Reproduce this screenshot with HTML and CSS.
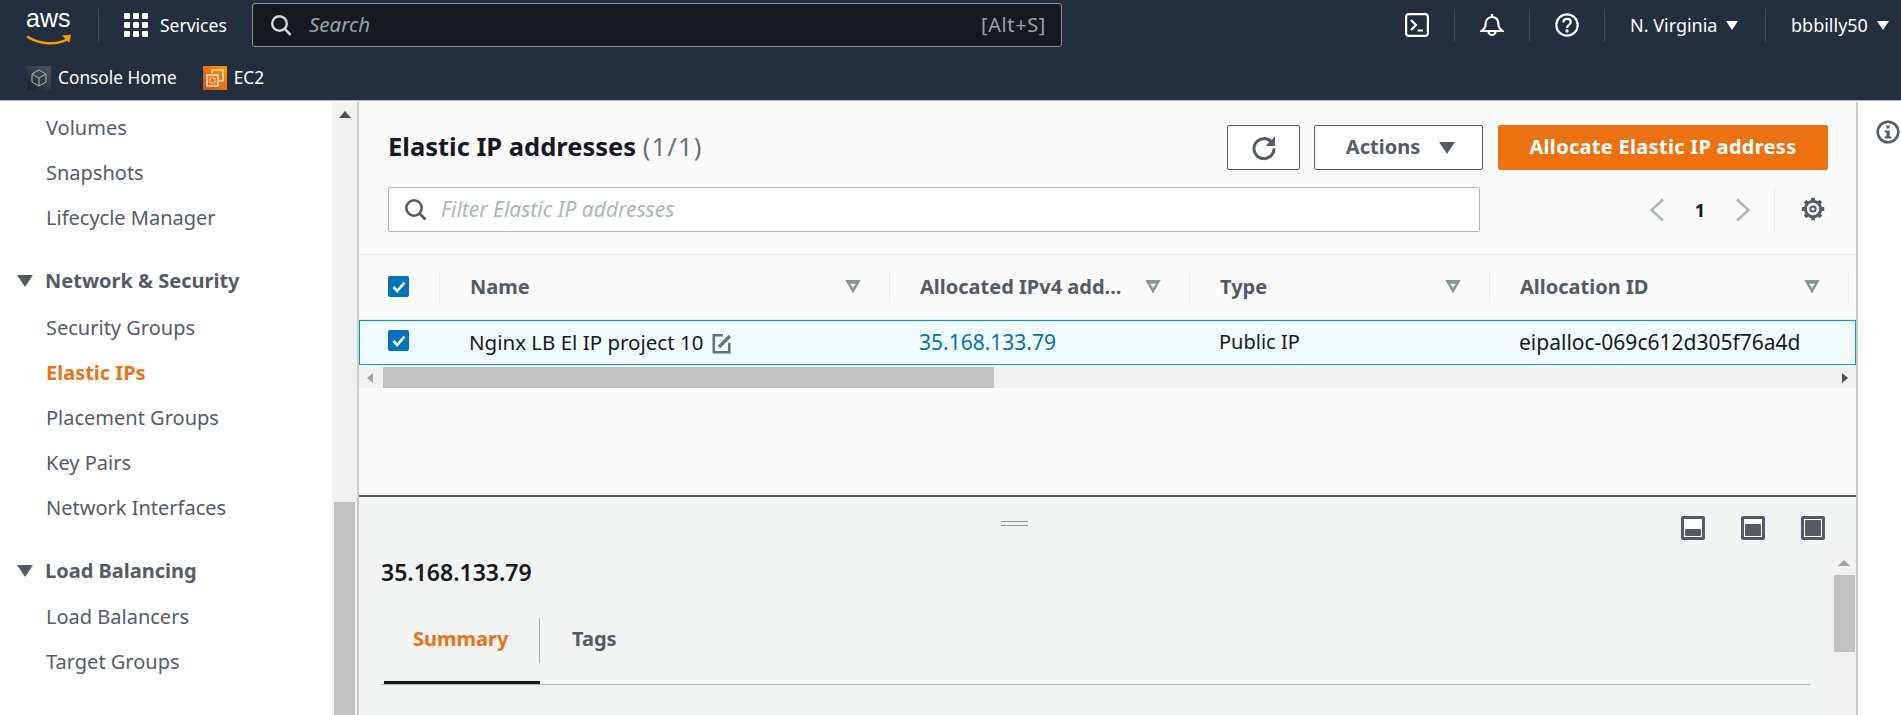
FILE: index.html
```html
<!DOCTYPE html>
<html lang="en">
<head>
  <meta charset="UTF-8">
  <title>Elastic IP addresses | EC2 Management Console</title>
  <link rel="stylesheet" href="styles.css">
</head>
<body>
  <header class="topbar">
    <div class="nav-main">
      <div class="aws-logo">
        <span class="aws-word">aws</span>
        <svg class="aws-smile" width="48" height="13" viewBox="0 0 48 13"><path d="M2 2.500c12 8 30 9 41 2.500" fill="none" stroke="#f90" stroke-width="2.600"/><path d="M37 1.500l9-.8-1.600 8.300z" fill="#f90"/></svg>
      </div>
      <span class="nav-sep sep-logo"></span>
      <svg class="grid-icon" width="24" height="24" viewBox="0 0 24 24" fill="#fff"><rect x="0" y="0" width="6" height="6" rx="1"/><rect x="9" y="0" width="6" height="6" rx="1"/><rect x="18" y="0" width="6" height="6" rx="1"/><rect x="0" y="9" width="6" height="6" rx="1"/><rect x="9" y="9" width="6" height="6" rx="1"/><rect x="18" y="9" width="6" height="6" rx="1"/><rect x="0" y="18" width="6" height="6" rx="1"/><rect x="9" y="18" width="6" height="6" rx="1"/><rect x="18" y="18" width="6" height="6" rx="1"/></svg>
      <span class="services">Services</span>
      <div class="search-box">
        <svg width="22" height="22" viewBox="0 0 22 22" fill="none" stroke="#d5dbdb" stroke-width="2.400"><circle cx="9.500" cy="9.500" r="7.300"/><path d="M14.800 14.800l5.700 6"/></svg>
        <span class="search-text">Search</span>
        <span class="search-key">[Alt+S]</span>
      </div>
      <svg class="nav-icon icon-term" width="24" height="24" viewBox="0 0 24 24" fill="none" stroke="#fff" stroke-width="2.200"><rect x="1.100" y="1.100" width="21.800" height="21.800" rx="3"/><path d="M6 7l5 5-5 5M12.500 17.500h5.500"/></svg>
      <span class="nav-sep"></span>
      <svg class="nav-icon" width="24" height="24" viewBox="0 0 24 24" fill="none" stroke="#fff" stroke-width="2.200"><path d="M12 1v3M5.500 12c0-5 2.500-8 6.500-8s6.500 3 6.500 8c0 2.500 1.500 4 4 6H1.500c2.500-2 4-3.500 4-6z"/><path d="M8.500 18.500a3.500 3.500 0 0 0 7 0"/></svg>
      <span class="nav-sep"></span>
      <svg class="nav-icon" width="24" height="24" viewBox="0 0 24 24" fill="none" stroke="#fff" stroke-width="2.200"><circle cx="12" cy="12" r="10.700"/><path d="M8.300 9.500c0-2.300 1.700-3.700 3.800-3.700s3.700 1.300 3.700 3.300c0 2.800-3.800 2.900-3.800 5.900"/><circle cx="12" cy="18" r=".6" fill="#fff"/></svg>
      <span class="nav-sep"></span>
      <span class="nav-menu region">N. Virginia <i class="caret-white"></i></span>
      <span class="nav-sep"></span>
      <span class="nav-menu user">bbbilly50 <i class="caret-white"></i></span>
    </div>
    <div class="nav-fav">
      <span class="fav-icon fav-home">
        <svg width="16" height="18" viewBox="0 0 16 18" fill="none" stroke="#aab7b8" stroke-width="1"><path d="M8 1l7 4v8l-7 4-7-4V5zM1 5l7 4 7-4M8 9v8"/></svg>
      </span>
      <span class="fav-label">Console Home</span>
      <span class="fav-icon fav-ec2">
        <svg width="18" height="18" viewBox="0 0 18 18" fill="none" stroke="#fff" stroke-width="1.200"><path d="M6 4V1h11v11h-4"/><rect x="1" y="6" width="11" height="11" fill="#e8751a"/><rect x="4" y="9" width="5" height="5" stroke-dasharray="1.500 1"/></svg>
      </span>
      <span class="fav-label">EC2</span>
    </div>
  </header>

  <div class="app">
    <nav class="sidebar">
      <ul class="side-list">
        <li>Volumes</li>
        <li>Snapshots</li>
        <li>Lifecycle Manager</li>
        <li class="side-head"><i class="caret-dark"></i>Network &amp; Security</li>
        <li>Security Groups</li>
        <li class="side-active">Elastic IPs</li>
        <li>Placement Groups</li>
        <li>Key Pairs</li>
        <li>Network Interfaces</li>
        <li class="side-head"><i class="caret-dark"></i>Load Balancing</li>
        <li>Load Balancers</li>
        <li>Target Groups</li>
      </ul>
      <div class="side-scroll">
        <i class="arrow-up"></i>
        <div class="side-thumb"></div>
      </div>
    </nav>

    <main class="content">
      <section class="list-panel">
        <div class="title-row">
          <h1 class="page-title">Elastic IP addresses <span class="count">(1/1)</span></h1>
          <button class="btn btn-refresh">
            <svg width="26" height="26" viewBox="0 0 26 26" fill="none" stroke="#545b64" stroke-width="3"><path d="M20.500 7A10 10 0 1 0 23 13.500"/><path d="M24 1.500v9.500h-9.500z" fill="#545b64" stroke="none"/></svg>
          </button>
          <button class="btn btn-actions"><span class="btn-text">Actions</span> <i class="caret-btn"></i></button>
          <button class="btn btn-primary"><span class="btn-text">Allocate Elastic IP address</span></button>
        </div>
        <div class="filter-row">
          <div class="filter-box">
            <svg width="23" height="23" viewBox="0 0 23 23" fill="none" stroke="#545b64" stroke-width="2.600"><circle cx="10" cy="10" r="7.700"/><path d="M15.500 15.500l6 6"/></svg>
            <span class="filter-text">Filter Elastic IP addresses</span>
          </div>
          <div class="pager">
            <svg width="16" height="24" viewBox="0 0 16 24" fill="none" stroke="#aab7b8" stroke-width="2.400"><path d="M14 1.500L2.500 12 14 22.500"/></svg>
            <span class="page-num">1</span>
            <svg width="16" height="24" viewBox="0 0 16 24" fill="none" stroke="#aab7b8" stroke-width="2.400"><path d="M2 1.500L13.500 12 2 22.500"/></svg>
          </div>
          <div class="gear-cell">
            <svg width="24" height="24" viewBox="0 0 24 24" fill="none" stroke="#545b64"><circle cx="12" cy="12" r="7.700" stroke-width="3"/><circle cx="12" cy="12" r="2.600" stroke-width="2"/><path d="M12 .8v4M12 19.200v4M4.100 4.100l2.800 2.800M17.100 17.100l2.800 2.800M.8 12h4M19.200 12h4M4.100 19.900l2.800-2.800M17.100 6.900l2.800-2.800" stroke-width="3.800"/></svg>
          </div>
        </div>

        <div class="table-head">
          <div class="cell-check"><span class="checkbox"><svg width="14" height="12" viewBox="0 0 14 12" fill="none" stroke="#fff" stroke-width="2.600"><path d="M1.500 6l3.700 4L12.500 1.500"/></svg></span></div>
          <div class="th">Name <i class="sort-icon"></i></div>
          <div class="th">Allocated IPv4 add... <i class="sort-icon"></i></div>
          <div class="th">Type <i class="sort-icon"></i></div>
          <div class="th">Allocation ID <i class="sort-icon"></i></div>
        </div>
        <div class="table-row">
          <div class="cell-check"><span class="checkbox"><svg width="14" height="12" viewBox="0 0 14 12" fill="none" stroke="#fff" stroke-width="2.600"><path d="M1.500 6l3.700 4L12.500 1.500"/></svg></span></div>
          <div class="td td-name">Nginx LB El IP project 10
            <svg class="edit-icon" width="20" height="21" viewBox="0 0 20 21" fill="none" stroke="#687078" stroke-width="2.600"><path d="M11 2.300H1.800v17h15.500V10"/><path d="M7 14L18 3" stroke-width="3.200"/></svg>
          </div>
          <div class="td td-wide"><a class="ip-link">35.168.133.79</a></div>
          <div class="td">Public IP</div>
          <div class="td td-wide">eipalloc-069c612d305f76a4d</div>
        </div>
        <div class="h-scroll">
          <i class="arrow-left"></i>
          <div class="h-thumb"></div>
          <i class="arrow-right"></i>
        </div>
      </section>

      <section class="detail-panel">
        <div class="detail-bar">
          <span class="grab"></span>
          <div class="split-icons">
            <span class="split-icon"><i class="split-low"></i></span>
            <span class="split-icon"><i class="split-mid"></i></span>
            <span class="split-icon"><i class="split-full"></i></span>
          </div>
        </div>
        <div class="detail-body">
          <div class="detail-main">
            <h2 class="detail-title">35.168.133.79</h2>
            <div class="tabs">
              <span class="tab tab-active">Summary</span>
              <span class="tab">Tags</span>
            </div>
          </div>
          <div class="detail-scroll">
            <i class="arrow-up-light"></i>
            <div class="detail-thumb"></div>
          </div>
        </div>
      </section>
    </main>

    <aside class="help-rail">
      <svg width="24" height="24" viewBox="0 0 24 24"><circle cx="12" cy="12" r="10.300" fill="none" stroke="#545b64" stroke-width="2.600"/><rect x="10.300" y="5.500" width="3.400" height="3" fill="#545b64"/><path d="M8.800 10.500h4.900v6h1.700v2H8.800v-2h1.600v-4H8.800z" fill="#545b64"/></svg>
    </aside>
  </div>
</body>
</html>
```

FILE: styles.css
```css
* {
  box-sizing: border-box;
}
html, body {
  height: 100%;
}
body {
  margin: 0;
  overflow: hidden;
  background-color: #fff;
  color: #16191f;
  font-family: "Noto Sans", "Liberation Sans", sans-serif;
  font-size: 20px;
  display: flex;
  flex-direction: column;
}
i {
  display: block;
}

/* top navigation */
.topbar {
  height: 102px;
  flex: none;
  background-color: #232f3e;
  border-bottom: 1px solid #fff;
  box-shadow: inset 0 -1px 0 #aab7b8;
  color: #fff;
}
.nav-main {
  height: 50px;
  display: flex;
  align-items: center;
  font-size: 18px;
}
.aws-logo {
  width: 72px;
  height: 50px;
  margin-left: 26px;
  position: relative;
}
.aws-word {
  position: absolute;
  left: 0;
  top: 4px;
  font-family: "Liberation Sans", sans-serif;
  font-size: 25px;
  line-height: 28px;
}
.aws-smile {
  position: absolute;
  left: -1px;
  top: 34px;
}
.nav-sep {
  width: 1px;
  height: 33px;
  background-color: #414d5c;
  flex: none;
  margin: 0 25px;
}
.sep-logo {
  margin: 0 25px 0 0;
}
.grid-icon {
  flex: none;
}
.services {
  margin-left: 12px;
  width: 92px;
  font-size: 17.500px;
}
.search-box {
  width: 810px;
  height: 44px;
  display: flex;
  align-items: center;
  padding: 0 15px 0 17px;
  background-color: #16191f;
  border: 1px solid #879596;
  border-radius: 3px;
  margin-right: 343px;
  flex: none;
}
.search-text {
  margin-left: 17px;
  font-style: italic;
  color: #95a5a6;
  font-size: 20.500px;
  margin-top: -2px;
}
.search-key {
  margin-left: auto;
  color: #95a5a6;
  font-size: 20px;
  letter-spacing: .6px;
  margin-top: -2px;
}
.nav-icon {
  flex: none;
}
.nav-menu {
  display: flex;
  align-items: center;
  gap: 9px;
  white-space: nowrap;
}
.region {
  width: 107px;
  margin-right: 3px;
}
.caret-white {
  width: 0;
  height: 0;
  border-left: 6px solid transparent;
  border-right: 6px solid transparent;
  border-top: 9px solid #fff;
}
.nav-fav {
  height: 50px;
  display: flex;
  align-items: center;
  padding: 6px 0 0 27px;
  font-size: 17.300px;
}
.fav-icon {
  width: 24px;
  height: 24px;
  display: flex;
  align-items: center;
  justify-content: center;
  flex: none;
}
.fav-home {
  background: linear-gradient(45deg, #1b2029, #4a5562);
}
.fav-ec2 {
  background: linear-gradient(45deg, #c8511b, #f90);
  margin-left: 26px;
}
.fav-label {
  margin-left: 7px;
  margin-top: -2px;
}

.app {
  flex: 1;
  min-height: 0;
  display: flex;
}

/* side navigation */
.sidebar {
  width: 359px;
  flex: none;
  display: flex;
  border-right: 2px solid #c9cdcd;
}
.side-list {
  list-style: none;
  margin: 0;
  padding: 3px 0 0 46px;
  width: 333px;
  color: #545b64;
}
.side-list li {
  height: 45px;
  line-height: 45px;
  white-space: nowrap;
}
.side-list .side-head {
  margin: 18px 0 0 -1px;
  height: 46.500px;
  font-weight: 700;
  position: relative;
}
.caret-dark {
  position: absolute;
  left: -28px;
  top: 17px;
  width: 0;
  height: 0;
  border-left: 8px solid transparent;
  border-right: 8px solid transparent;
  border-top: 12px solid #545b64;
}
.side-list .side-active {
  color: #ec7211;
  font-weight: 700;
}
.side-scroll {
  width: 25px;
  background-color: #f1f1f1;
  padding: 9px 2px 0;
  display: flex;
  flex-direction: column;
  align-items: center;
}
.arrow-up {
  width: 0;
  height: 0;
  border-left: 6px solid transparent;
  border-right: 6px solid transparent;
  border-bottom: 7px solid #505050;
}
.side-thumb {
  width: 21px;
  flex: 1;
  margin-top: 384px;
  background-color: #c1c1c1;
}

/* main content */
.content {
  width: 1499px;
  flex: none;
  display: flex;
  flex-direction: column;
  border-right: 2px solid #c9cdcd;
}
.list-panel {
  height: 395px;
  flex: none;
  background-color: #fafafa;
  border-bottom: 2px solid #545b64;
}
.title-row {
  height: 85px;
  padding: 23px 28px 0 29px;
  display: flex;
  align-items: flex-start;
}
.page-title {
  margin: -1px auto 0 0;
  font-size: 25.500px;
  line-height: 45px;
  font-weight: 700;
}
.count {
  font-weight: 400;
  color: #687078;
  letter-spacing: 1.200px;
}
.btn {
  height: 45px;
  border-radius: 2px;
  font-family: inherit;
  font-size: 20px;
  font-weight: 700;
  display: flex;
  align-items: center;
  justify-content: center;
  padding: 0;
}
.btn-text {
  margin-top: -3px;
}
.btn-refresh {
  width: 73px;
  background-color: #fff;
  border: 1px solid #545b64;
  margin-right: 14px;
}
.btn-actions {
  width: 169px;
  background-color: #fff;
  border: 1px solid #545b64;
  color: #545b64;
  gap: 19px;
  padding-left: 4px;
  margin-right: 15px;
}
.caret-btn {
  width: 0;
  height: 0;
  border-left: 8px solid transparent;
  border-right: 8px solid transparent;
  border-top: 12px solid #545b64;
}
.btn-primary {
  width: 330px;
  background-color: #ec7211;
  border: 1px solid #ec7211;
  color: #fff;
  letter-spacing: .3px;
}
.filter-row {
  height: 68px;
  padding: 0 0 23px 29px;
  display: flex;
  border-bottom: 1px solid #eaeded;
}
.filter-box {
  width: 1092px;
  height: 45px;
  display: flex;
  align-items: center;
  padding-left: 15px;
  background-color: #fff;
  border: 1px solid #aab7b8;
  border-radius: 2px;
}
.filter-text {
  margin: -2px 0 0 14px;
  font-style: italic;
  color: #aab7b8;
  font-size: 21px;
}
.pager {
  width: 294px;
  height: 45px;
  display: flex;
  align-items: center;
  justify-content: flex-end;
  gap: 30px;
  padding-right: 23px;
  font-size: 18px;
}
.page-num {
  font-weight: 700;
}
.gear-cell {
  width: 51px;
  height: 45px;
  border-left: 1px solid #eaeded;
  padding: 10px 0 0 26px;
}

/* table */
.table-head, .table-row {
  display: grid;
  grid-template-columns: 81px 450px 300px 300px 359px 1fr;
  align-items: center;
}
.table-head {
  height: 65px;
  padding-bottom: 1px;
  border-bottom: 1px solid #eaeded;
}
.table-row {
  height: 45px;
  background-color: #f1faff;
  border: 1px solid #00a1c9;
}
.cell-check {
  padding-left: 29px;
  display: flex;
}
.table-head .cell-check {
  height: 32px;
  align-items: center;
  border-right: 1px solid #eaeded;
}
.table-row .cell-check {
  padding: 0 0 4px 28px;
}
.checkbox {
  width: 21px;
  height: 21px;
  border-radius: 2px;
  background-color: #0073bb;
  display: flex;
  align-items: center;
  justify-content: center;
}
.th {
  height: 32px;
  line-height: 32px;
  padding: 0 28px 0 30px;
  display: flex;
  align-items: center;
  justify-content: space-between;
  border-right: 1px solid #eaeded;
  font-weight: 700;
  color: #545b64;
  white-space: nowrap;
}
.sort-icon {
  width: 16px;
  height: 14px;
  background-color: #879596;
  clip-path: polygon(0 0, 100% 0, 50% 100%, 50% 60%, 68% 30%, 32% 30%, 50% 60%, 50% 100%);
  flex: none;
}
.td {
  padding: 0 0 2px 28px;
  display: flex;
  align-items: center;
  white-space: nowrap;
}
.td-name {
  font-size: 20.500px;
}
.td-wide {
  font-size: 21px;
}
.edit-icon {
  margin: 3px 0 0 9px;
}
.ip-link {
  color: #0073bb;
}
.h-scroll {
  height: 21px;
  margin-top: 2px;
  background-color: #f1f1f1;
  display: flex;
  align-items: center;
  padding: 0 8px 0 8px;
}
.arrow-left {
  width: 0;
  height: 0;
  border-top: 5px solid transparent;
  border-bottom: 5px solid transparent;
  border-right: 6px solid #a3a3a3;
}
.h-thumb {
  width: 611px;
  height: 21px;
  margin-left: 10px;
  background-color: #c1c1c1;
}
.arrow-right {
  width: 0;
  height: 0;
  margin-left: auto;
  border-top: 5px solid transparent;
  border-bottom: 5px solid transparent;
  border-left: 6px solid #505050;
}

/* split panel */
.detail-panel {
  flex: 1;
  min-height: 0;
  background-color: #f2f3f3;
  display: flex;
  flex-direction: column;
}
.detail-bar {
  height: 53px;
  flex: none;
  position: relative;
}
.grab {
  position: absolute;
  left: 642px;
  top: 24px;
  width: 27px;
  height: 5px;
  border-top: 1px solid #879596;
  border-bottom: 1px solid #879596;
}
.split-icons {
  display: flex;
  justify-content: flex-end;
  gap: 36px;
  padding: 19px 31px 0 0;
}
.split-icon {
  width: 24px;
  height: 24px;
  border: 3px solid #545b64;
  border-radius: 2px;
  background-color: #fff;
  padding: 1px;
  display: flex;
  align-items: flex-end;
}
.split-icon i {
  width: 100%;
  background-color: #545b64;
  border-radius: 1px;
}
.split-low { height: 7px; }
.split-mid { height: 12px; }
.split-full { height: 100%; }
.detail-body {
  flex: 1;
  min-height: 0;
  display: flex;
}
.detail-main {
  flex: 1;
  padding: 9px 22px 0 22px;
}
.detail-title {
  margin: 0;
  font-size: 23px;
  line-height: 27px;
  font-weight: 600;
}
.tabs {
  margin-top: 21px;
  height: 78px;
  display: flex;
  border-bottom: 1px solid #aab7b8;
}
.tab {
  height: 45px;
  margin-top: 11px;
  line-height: 42px;
  font-weight: 700;
  color: #545b64;
  padding: 0 32px;
}
.tab-active {
  color: #ec7211;
  width: 156px;
  border-right: 1px solid #aab7b8;
  margin-left: 3px;
  padding: 0 0 0 29px;
  position: relative;
}
.tab-active::after {
  content: "";
  position: absolute;
  left: 0;
  right: -1px;
  top: 63px;
  height: 3px;
  background-color: #16191f;
}
.detail-scroll {
  width: 24px;
  flex: none;
  background-color: #f1f1f1;
  display: flex;
  flex-direction: column;
  align-items: center;
  padding-top: 10px;
}
.arrow-up-light {
  width: 0;
  height: 0;
  border-left: 6px solid transparent;
  border-right: 6px solid transparent;
  border-bottom: 6px solid #a3a3a3;
}
.detail-thumb {
  width: 21px;
  height: 77px;
  margin-top: 9px;
  background-color: #c1c1c1;
}
.help-rail {
  flex: 1;
  padding: 18px 0 0 18px;
}
```
